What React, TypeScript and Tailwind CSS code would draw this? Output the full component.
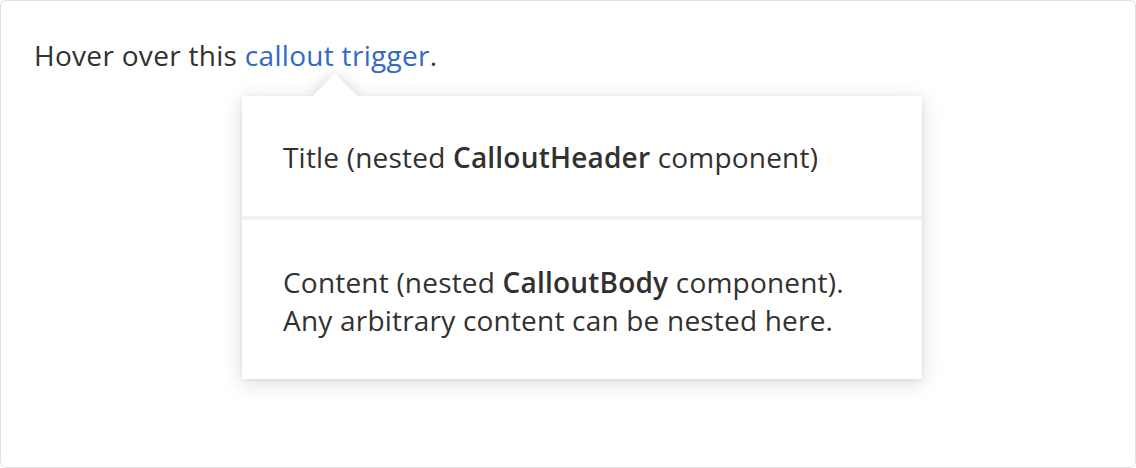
import React from 'react';

const CalloutHeader = ({ children }: { children: React.ReactNode }) => (
  <div className="px-[41px] pt-[41px] pb-[39px] border-b-4 border-[#f3f2f1]">
    {children}
  </div>
);

const CalloutBody = ({ children }: { children: React.ReactNode }) => (
  <div className="px-[41px] pt-[43px] pb-[40px] leading-[38px]">{children}</div>
);

const App = () => {
  return (
    <div className="w-[1136px] h-[468px] bg-white font-['Open_Sans',sans-serif] text-[28px] leading-[40px] text-[#323130]">
      <div className="relative h-full border border-[#e1e1e1] rounded-[6px] pl-[33px] pt-[34px]">
        <p className="tracking-[0.3px]">
          Hover over this <span className="text-[#3269c4] cursor-pointer">callout trigger</span>.
        </p>

        {/* Callout (open) */}
        <div className="absolute left-[241px] top-[95px] w-[680px] bg-white tracking-[0.2px] shadow-[0_4px_20px_rgba(0,0,0,0.14),0_1px_4px_rgba(0,0,0,0.08)]">
          {/* Beak */}
          <div className="absolute left-[77px] -top-[16px] w-[32px] h-[32px] rotate-45 bg-white shadow-[0_0_14px_rgba(0,0,0,0.16)]" />
          <div className="relative bg-white">
            <CalloutHeader>
              Title (nested <span className="font-semibold">CalloutHeader</span> component)
            </CalloutHeader>
            <CalloutBody>
              Content (nested <span className="font-semibold">CalloutBody</span> component).
              <br />
              Any arbitrary content can be nested here.
            </CalloutBody>
          </div>
        </div>
      </div>
    </div>
  );
};

export default App;
